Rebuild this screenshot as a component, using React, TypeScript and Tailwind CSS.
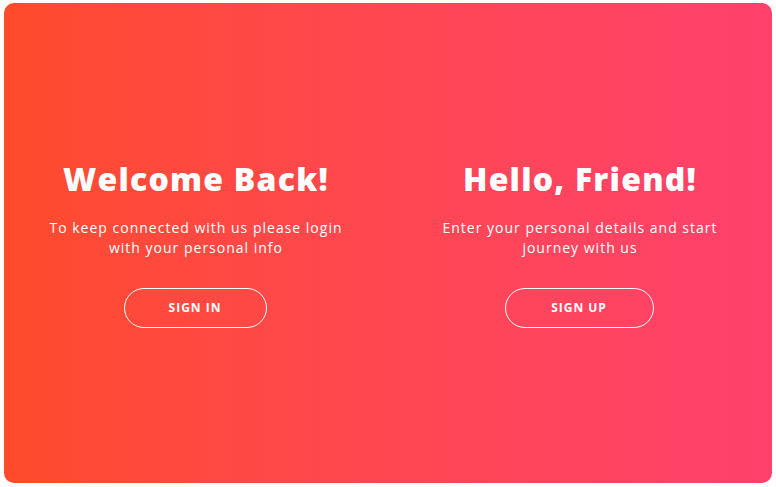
export default function App() {
  const font = { fontFamily: '"Open Sans", "Liberation Sans", sans-serif' };
  return (
    <div className="w-[776px] h-[487px] bg-white pt-[3px] pl-[4px]" style={font}>
      <div className="w-[768px] h-[480px] rounded-[10px] bg-linear-to-r from-[#FF4B2B] to-[#FF416C] flex text-white">
        <div className="w-1/2 h-full flex flex-col items-center justify-center px-10 text-center">
          <h1 className="text-[32px] font-extrabold leading-[39px] tracking-[1.2px]">Welcome Back!</h1>
          <p className="text-[14px] leading-[20px] tracking-[1px] mt-5 mb-[30px]">
            To keep connected with us please login with your personal info
          </p>
          <button className="w-[143px] h-[40px] rounded-[20px] border border-white text-[12px] font-bold tracking-[1px] uppercase -translate-x-px">
            Sign In
          </button>
        </div>
        <div className="w-1/2 h-full flex flex-col items-center justify-center px-10 text-center">
          <h1 className="text-[32px] font-extrabold leading-[39px] tracking-[1.2px]">Hello, Friend!</h1>
          <p className="text-[14px] leading-[20px] tracking-[1px] mt-5 mb-[30px]">
            Enter your personal details and start journey with us
          </p>
          <button className="w-[149px] h-[40px] rounded-[20px] border border-white text-[12px] font-bold tracking-[1px] uppercase -translate-x-px">
            Sign Up
          </button>
        </div>
      </div>
    </div>
  );
}
